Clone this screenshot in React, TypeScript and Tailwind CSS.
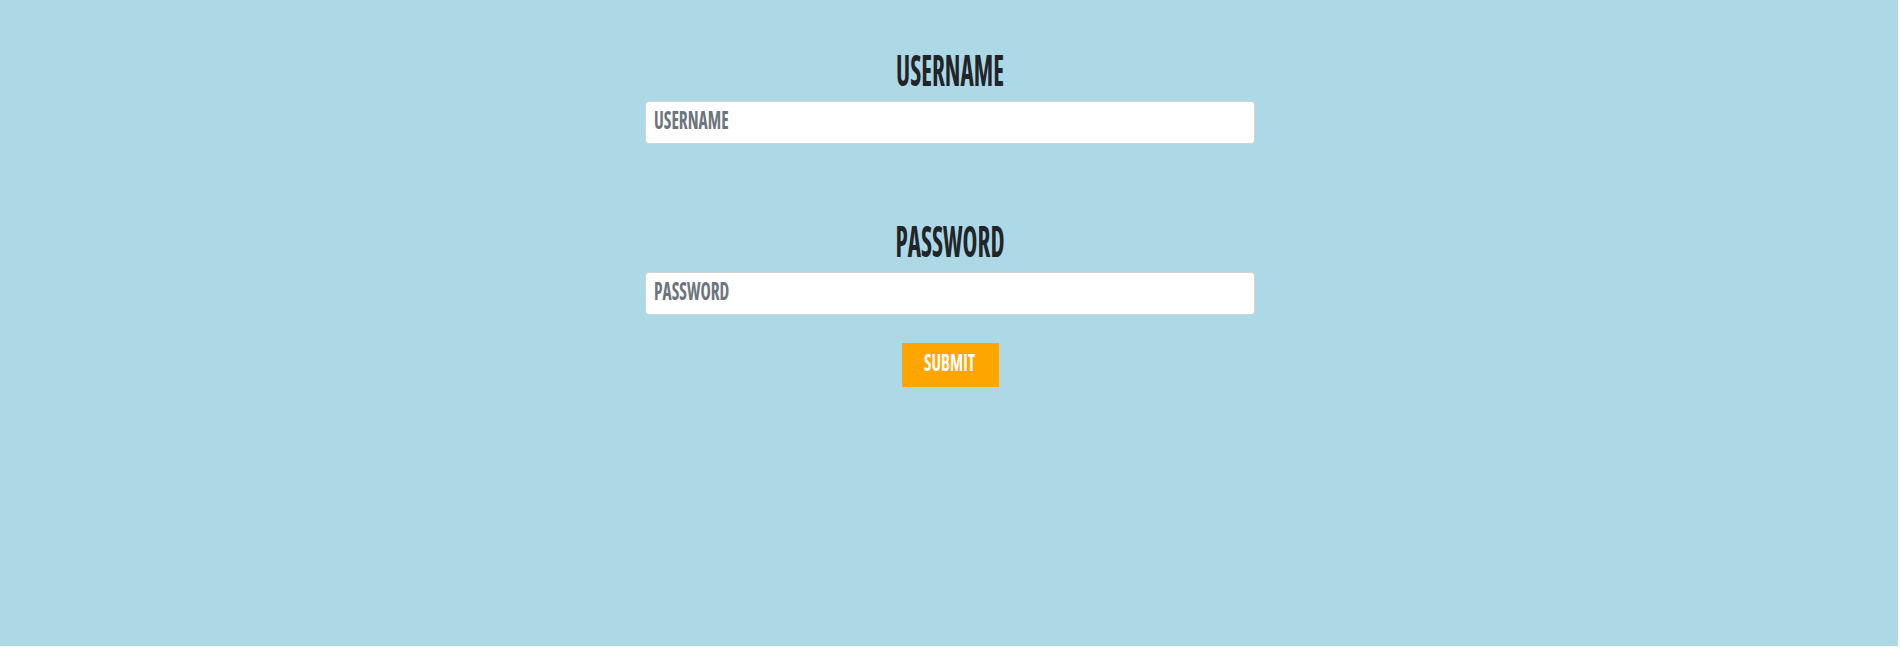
import React from "react";

const font = "font-['Open_Sans',sans-serif] [font-stretch:75%]";

function Field({ label, type, className = "" }: { label: string; type: string; className?: string }) {
  return (
    <div className={`flex flex-col items-center ${className}`}>
      <h2 className="h-[50px] text-[42px] leading-[50px] font-bold text-[#212529]">
        <span className="inline-block scale-x-[0.6]">{label}</span>
      </h2>
      <label className="relative mt-[6px] block h-[43px] w-[610px]">
        <input
          type={type}
          aria-label={label}
          className="h-full w-full rounded-[4px] border border-[#ced4da] bg-white px-[9px] outline-none"
        />
        <span
          aria-hidden
          className="pointer-events-none absolute left-[9px] top-0 origin-left scale-x-[0.71] text-[24.5px] leading-[38px] font-bold text-[#6c757d]"
        >
          {label}
        </span>
      </label>
    </div>
  );
}

export default function App() {
  return (
    <div className={`h-[646px] w-[1898px] bg-[#add8e6] pl-[2px] pt-[45px] ${font}`}>
      <form className="flex flex-col items-center" onSubmit={(e) => e.preventDefault()}>
        <Field label="USERNAME" type="text" />
        <Field label="PASSWORD" type="password" className="mt-[72px]" />
        <button
          type="submit"
          className="mt-[28px] h-[44px] w-[97px] bg-[#ffa500] pb-[4px] text-[22.4px] leading-[40px] font-bold text-white"
        >
          <span className="inline-block scale-x-[0.76]">SUBMIT</span>
        </button>
      </form>
    </div>
  );
}
